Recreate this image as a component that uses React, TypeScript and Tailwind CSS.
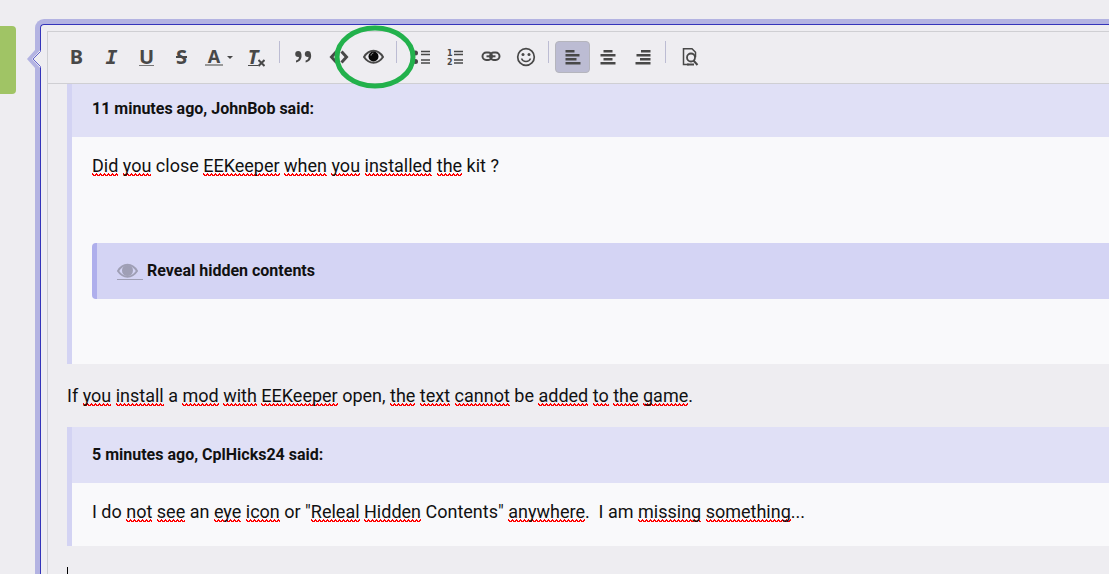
import React from 'react';
import type { ReactNode } from 'react';

const W = ({ children }: { children: ReactNode }) => (
  <span className="bg-[linear-gradient(90deg,#f00_25%,transparent_25%),linear-gradient(90deg,#f00_50%,transparent_50%,transparent_75%,#f00_75%),linear-gradient(90deg,transparent_25%,#f00_25%)] bg-[length:4px_1px] bg-[position:0_calc(100%-2px),0_calc(100%-1px),0_100%] bg-repeat-x">
    {children}
  </span>
);

type ToolProps = { label: string; active?: boolean; wide?: boolean; children: ReactNode };

const Tool = ({ label, active, wide, children }: ToolProps) => (
  <button
    type="button"
    aria-label={label}
    title={label}
    className={
      'flex h-8 shrink-0 items-center justify-center rounded-sm border text-xl leading-5 font-bold text-[#484848] ' +
      (wide ? 'w-10 ' : 'w-[35px] ') +
      (active ? 'border-[#b5b5bd] bg-[#bcbcd3]' : 'border-transparent')
    }
  >
    {children}
  </button>
);

const Icon = ({ children, w = 20 }: { children: ReactNode; w?: number }) => (
  <svg width={w} height="20" viewBox={`0 0 ${w} 20`} fill="none" stroke="#484848" strokeWidth="2" aria-hidden="true">
    {children}
  </svg>
);

const Separator = () => <span className="ml-[5px] mr-1.5 h-[22px] w-px shrink-0 self-start bg-[#bcbcd3]" />;

const EyeShape = () => (
  <path d="M1 10C4 5 7 3.800 10.500 3.800S17 5 20 10c-3 4.500-6 5.700-9.500 5.700S4 14.500 1 10Z" />
);

const Quote = ({ title, children }: { title: string; children: ReactNode }) => (
  <blockquote className="border-l-[5px] border-[#d3d3f3] bg-[#f9f9fb]">
    <div className="bg-[#e0e0f6] px-5 py-4 text-base font-bold leading-6">{title}</div>
    {children}
  </blockquote>
);

export default function App() {
  return (
    <div className="flex h-screen overflow-hidden bg-[#eeedf1] font-['Roboto',sans-serif] text-[#111]">
      <div className="mt-[26px] h-[68px] w-4 shrink-0 rounded-r-sm bg-[#a0c465]" />
      <div className="relative ml-[19px] mt-[19px] flex min-w-0 flex-1 rounded-tl-[9px] border-l-[5px] border-t-[5px] border-[#b3b3e2]">
        <div className="min-w-0 flex-1 rounded-tl-[4px] border-l border-t border-[#3434ba] pl-1.5 pt-1.5">
          <section className="flex h-full flex-col border-l border-t border-[#cfcfd3]">
            <div role="toolbar" aria-label="Formatting" className="relative flex h-[52px] shrink-0 items-start border-b border-[#cfcfd3] bg-[#eeedf1] pl-[11px] pt-[9px]">
              <Tool label="Bold"><span className="font-['Noto_Sans',sans-serif]">B</span></Tool>
              <Tool label="Italic"><span className="font-['DejaVu_Sans_Mono',monospace] italic">I</span></Tool>
              <Tool label="Underline">
                <span className="flex h-[18px] items-center border-b border-[#777] font-['Noto_Sans',sans-serif]">U</span>
              </Tool>
              <Tool label="Strikethrough">
                <span className="font-['Noto_Sans',sans-serif] line-through decoration-2">S</span>
              </Tool>
              <Tool label="Text colour" wide>
                <span className="flex h-[18px] w-[18px] items-center justify-center border-b-2 border-[#999] font-['Noto_Sans',sans-serif] text-lg">A</span>
                <svg className="ml-1" width="6" height="3" viewBox="0 0 6 3" fill="#484848" aria-hidden="true"><path d="M0 0h6L3 3Z" /></svg>
              </Tool>
              <Tool label="Remove formatting">
                <span className="flex h-[17px] items-center border-b border-[#484848] font-['Noto_Sans',sans-serif] italic">T</span>
                <svg className="mt-3" width="7" height="8" viewBox="0 0 7 8" fill="none" stroke="#484848" strokeWidth="2" aria-hidden="true"><path d="M.5 1l6 6M6.500 1l-6 6" /></svg>
              </Tool>
              <Separator />
              <Tool label="Quote"><Icon><g fill="#484848" stroke="none"><circle cx="4.200" cy="7" r="3" /><path d="M4 9.500l3.200-3c1.200 4.500-.7 8-5.200 9v-2c2-.5 3-1.800 3-4Z" /><circle cx="13.800" cy="7" r="3" /><path d="M13.600 9.500l3.200-3c1.200 4.500-.7 8-5.200 9v-2c2-.5 3-1.800 3-4Z" /></g></Icon></Tool>
              <Tool label="Code"><Icon><path strokeWidth="3" d="M7.500 4.500L2.500 10l5 5.500M12.500 4.500l5 5.500-5 5.500" /></Icon></Tool>
              <Tool label="Spoiler"><Icon w={21}><EyeShape /><circle cx="10.500" cy="9.500" r="5" fill="#080808" stroke="none" /><path d="M8 8.500c.2-1.500 1-2.200 2.300-2.400" stroke="#aaa" strokeWidth="1" /></Icon></Tool>
              <Separator />
              <Tool label="Bulleted list"><Icon><g fill="#484848" stroke="none"><circle cx="4.500" cy="6" r="2.500" /><circle cx="4.500" cy="14.500" r="2.500" /></g><path strokeWidth="1.500" d="M10 4.500h9M10 7.500h9M10 13h9M10 16h9" /></Icon></Tool>
              <Tool label="Numbered list">
                <Icon>
                  <path strokeWidth="1.500" d="M8 4.500h9M8 7.500h9M8 13h9M8 16h9" />
                  <g fill="#484848" stroke="none" fontFamily="DejaVu Sans" fontSize="8"><text x="1" y="9">1</text><text x="1" y="18">2</text></g>
                </Icon>
              </Tool>
              <Tool label="Link"><Icon><rect x="1.500" y="5.500" width="9.500" height="7.500" rx="3.700" /><rect x="9" y="5.500" width="9.500" height="7.500" rx="3.700" /><path d="M5.500 9.300h9" /></Icon></Tool>
              <Tool label="Emoji"><Icon><circle cx="10" cy="10" r="8.300" strokeWidth="1.700" /><path d="M5.500 11.500c1.500 4 7.500 4 9 0" strokeWidth="1.500" /><circle cx="7" cy="7.500" r="1.500" fill="#484848" stroke="none" /><circle cx="13" cy="7.500" r="1.500" fill="#484848" stroke="none" /></Icon></Tool>
              <Separator />
              <Tool label="Align left" active><Icon><path strokeWidth="2.400" d="M2.500 4.300h9M2.500 8.300h14M2.500 12.300h11M2.500 16.300h15" /></Icon></Tool>
              <Tool label="Centre"><Icon><path strokeWidth="2.400" d="M5.500 4.300h9M2.500 8.300h15M5.500 12.300h9M2.500 16.300h15" /></Icon></Tool>
              <Tool label="Align right"><Icon><path strokeWidth="2.400" d="M8 4.300h9.500M3.500 8.300h14M7 12.300h10.500M2.500 16.300h15" /></Icon></Tool>
              <Separator />
              <Tool label="Preview"><Icon><path strokeWidth="1.500" d="M9 17.500H3.500V1.800H12l3.500 3.500v5" /><circle cx="11" cy="10.500" r="4" strokeWidth="1.800" /><path d="M13.500 13.500l4 4.500M7 17.500h7" /></Icon></Tool>
              <svg className="pointer-events-none absolute -top-[8px] left-[286px]" width="82" height="66" viewBox="0 0 82 66" aria-hidden="true">
                <ellipse cx="41" cy="33" rx="38" ry="29" fill="none" stroke="#22b14c" strokeWidth="5" />
              </svg>
            </div>
            <div className="min-h-0 flex-1 overflow-hidden pl-[19px] text-lg leading-[29px]">
              <div className="-mt-[3px]">
                <Quote title="11 minutes ago, JohnBob said:">
                  <div className="pb-[65px] pl-5 pt-3.5">
                    <p><W>Did</W> <W>you</W> close <W>EEKeeper</W> <W>when</W> <W>you</W> <W>installed</W> <W>the</W> kit ?</p>
                    <div className="mt-[63px] flex h-14 items-center rounded-l border-l-[5px] border-[#afafec] bg-[#d4d4f4] pl-5 text-base font-bold">
                      <a href="#hidden" className="mr-1 flex h-[17px] w-[26px] items-start border-b border-[#9f9fb5]">
                        <svg width="21" height="15" viewBox="0 2 21 15" fill="none" stroke="#9f9fb5" strokeWidth="2" aria-label="Show"><EyeShape /><circle cx="10.500" cy="9.500" r="5.500" fill="#9f9fb5" stroke="none" /></svg>
                      </a>
                      Reveal hidden contents
                    </div>
                  </div>
                </Quote>
                <p className="py-[17px]">If <W>you</W> <W>install</W> a <W>mod</W> <W>with</W> <W>EEKeeper</W> open, <W>the</W> <W>text</W> <W>cannot</W> be <W>added</W> <W>to</W> <W>the</W> <W>game</W>.</p>
                <Quote title="5 minutes ago, CplHicks24 said:">
                  <p className="px-5 pb-5 pt-3.5">I do <W>not</W> <W>see</W> an <W>eye</W> <W>icon</W> or "<W>Releal</W> <W>Hidden</W> Contents" <W>anywhere</W>.&nbsp; I am <W>missing</W> <W>something</W>...</p>
                </Quote>
                <div className="mt-[21px] h-5 w-px bg-black" />
              </div>
            </div>
          </section>
        </div>
        <svg className="absolute -left-[13px] top-[26px]" width="16" height="18" viewBox="0 0 16 18" aria-hidden="true">
          <path d="M16 0H13L5 9l8 9h3Z" fill="#eeedf1" />
          <path d="M8 0L0 9l8 9h5L5 9l8-9Z" fill="#b3b3e2" />
          <path d="M13.500 0v1.500L6 9l7.500 7.500V18" fill="none" stroke="#6464cc" />
        </svg>
      </div>
    </div>
  );
}
